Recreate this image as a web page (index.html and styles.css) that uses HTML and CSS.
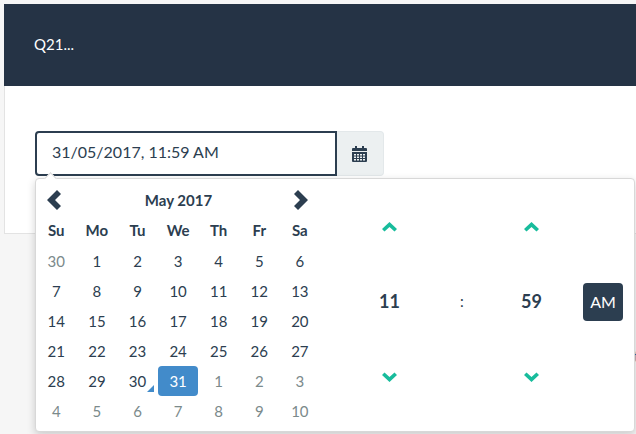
FILE: index.html
```html
<!DOCTYPE html>
<html lang="en">
<head>
  <meta charset="UTF-8">
  <title>Question</title>
  <link rel="stylesheet" href="styles.css">
</head>
<body>
<div class="panel">
  <div class="panel-head">Q21...</div>
  <div class="panel-body">
    <div class="input-group">
      <div class="date-input">31/05/2017, 11:59 AM</div>
      <div class="addon">
        <svg class="cal-icon" width="15" height="16" viewBox="0 0 15 16">
          <path fill="#2c3e50" d="M3 0h2v2h5V0h2v2h2a1 1 0 0 1 1 1v2H0V3a1 1 0 0 1 1-1h2z"/>
          <path fill="#2c3e50" fill-rule="evenodd" d="M0 6h15v9a1 1 0 0 1-1 1H1a1 1 0 0 1-1-1zM2 8v1.500h2V8zM5 8v1.500h2V8zM8 8v1.500h2V8zM11 8v1.500h2V8zM2 10.500V12h2v-1.500zM5 10.500V12h2v-1.500zM8 10.500V12h2v-1.500zM11 10.500V12h2v-1.500zM2 13v1.500h2V13zM5 13v1.500h2V13zM8 13v1.500h2V13zM11 13v1.500h2V13z"/>
        </svg>
      </div>
    </div>
  </div>
</div>
<span class="cut-link">t</span>

<div class="popover">
  <div class="arrow"></div>
  <div class="calendar">
    <div class="month-bar">
      <svg class="nav" width="16" height="20" viewBox="0 0 16 20"><path fill="#2c3e50" d="M12 0l4 4-6 6 6 6-4 4L2 10z"/></svg>
      <span class="month">May 2017</span>
      <svg class="nav" width="16" height="20" viewBox="0 0 16 20"><path fill="#2c3e50" d="M4 0L0 4l6 6-6 6 4 4 10-10z"/></svg>
    </div>
    <div class="days">
      <b>Su</b><b>Mo</b><b>Tu</b><b>We</b><b>Th</b><b>Fr</b><b>Sa</b>
      <span class="off">30</span><span>1</span><span>2</span><span>3</span><span>4</span><span>5</span><span>6</span>
      <span>7</span><span>8</span><span>9</span><span>10</span><span>11</span><span>12</span><span>13</span>
      <span>14</span><span>15</span><span>16</span><span>17</span><span>18</span><span>19</span><span>20</span>
      <span>21</span><span>22</span><span>23</span><span>24</span><span>25</span><span>26</span><span>27</span>
      <span>28</span><span>29</span><span class="today">30</span><span class="active">31</span><span class="off">1</span><span class="off">2</span><span class="off">3</span>
      <span class="off">4</span><span class="off">5</span><span class="off">6</span><span class="off">7</span><span class="off">8</span><span class="off">9</span><span class="off">10</span>
    </div>
  </div>
  <div class="time">
    <div class="time-col">
      <svg class="chev" width="15" height="10" viewBox="0 0 15 10"><path fill="#18bc9c" d="M7.500 0L15 7l-2.500 2.500-5-4.500-5 4.500L0 7z"/></svg>
      <span class="num">11</span>
      <svg class="chev" width="15" height="10" viewBox="0 0 15 10"><path fill="#18bc9c" d="M7.500 10L15 3 12.500.5l-5 4.500-5-4.500L0 3z"/></svg>
    </div>
    <span class="colon">:</span>
    <div class="time-col">
      <svg class="chev" width="15" height="10" viewBox="0 0 15 10"><path fill="#18bc9c" d="M7.500 0L15 7l-2.500 2.500-5-4.500-5 4.500L0 7z"/></svg>
      <span class="num">59</span>
      <svg class="chev" width="15" height="10" viewBox="0 0 15 10"><path fill="#18bc9c" d="M7.500 10L15 3 12.500.5l-5 4.500-5-4.500L0 3z"/></svg>
    </div>
    <div class="ampm">AM</div>
  </div>
</div>
</body>
</html>
```

FILE: styles.css
```css
*{
  box-sizing: border-box;
}
html, body{
  height: 100%;
}
body{
  margin: 0;
  padding: 4px 0 0 4px;
  background: #f6f6f6;
  font-family: Lato, "Liberation Sans", sans-serif;
  font-size: 15px;
  color: #2c3e50;
  overflow: hidden;
}
.panel{
  width: 640px;
  height: 230px;
  background: #fff;
  border: 1px solid #e3e3e3;
  border-top: 0;
}
.panel-head{
  height: 82px;
  margin-left: -1px;
  padding: 30px 30px 0;
  background: #253345;
  color: #fff;
  line-height: 20px;
}
.panel-body{
  padding: 45px 30px 0;
}
.input-group{
  display: flex;
  height: 45px;
}
.date-input{
  width: 302px;
  padding: 0 15px;
  border: 2px solid #2c3e50;
  border-radius: 4px 0 0 4px;
  font-size: 16px;
  line-height: 38px;
  background: #fff;
}
.addon{
  width: 47px;
  padding-right: 1px;
  display: flex;
  align-items: center;
  justify-content: center;
  background: #ecf0f1;
  border: 1px solid #e3e8ea;
  border-left: 0;
  border-radius: 0 4px 4px 0;
}
.cut-link{
  position: absolute;
  left: 634px;
  top: 347px;
  color: #2c6fa8;
  line-height: 18px;
}
.popover{
  position: absolute;
  left: 35px;
  top: 178px;
  width: 600px;
  height: 254px;
  display: flex;
  background: #fff;
  border: 1px solid #d8d8d8;
  border-radius: 4px;
  box-shadow: 0 3px 9px rgba(0,0,0,.18);
}
.arrow{
  position: absolute;
  left: 10px;
  top: -5px;
  width: 9px;
  height: 9px;
  background: #fff;
  border-left: 1px solid #d8d8d8;
  border-top: 1px solid #d8d8d8;
  transform: rotate(45deg);
}
.calendar{
  width: 335px;
}
.month-bar{
  height: 37px;
  display: flex;
  align-items: center;
  justify-content: space-between;
  padding: 5px 61px 0 9px;
}
.month{
  padding-left: 2px;
  font-weight: 700;
  font-size: 15px;
  line-height: 20px;
  margin-top: -1px;
}
.days{
  display: grid;
  grid-template-columns: repeat(7, 40.6px);
  grid-auto-rows: 30px;
  text-align: center;
}
.days b, .days span{
  position: relative;
  line-height: 30px;
}
.days b{
  font-weight: 700;
  line-height: 28px;
}
.off{
  color: #7b8a8b;
}
.active{
  background: #428bca;
  color: #fff;
  border-radius: 4px;
}
.today::after{
  content: "";
  position: absolute;
  right: 4px;
  bottom: 4px;
  border-left: 7px solid transparent;
  border-bottom: 7px solid #428bca;
}
.time{
  flex: 1;
  display: flex;
  align-items: center;
}
.time-col{
  width: 15px;
  height: 100%;
  margin-left: 11px;
  display: flex;
  flex-direction: column;
  align-items: center;
  justify-content: space-between;
  padding: 43px 0 49px;
}
.num{
  margin-bottom: 3px;
  font-size: 18px;
  font-weight: 700;
  line-height: 24px;
}
.colon{
  width: 127px;
  padding: 0 0 0 63px;
  margin-bottom: 8px;
}
.time-col + .colon + .time-col{
  margin-left: 0;
}
.ampm{
  width: 40px;
  height: 38px;
  margin: 0 0 6px 44px;
  background: #2c3e50;
  color: #fff;
  border-radius: 4px;
  font-size: 16px;
  text-align: center;
  line-height: 38px;
}
```
